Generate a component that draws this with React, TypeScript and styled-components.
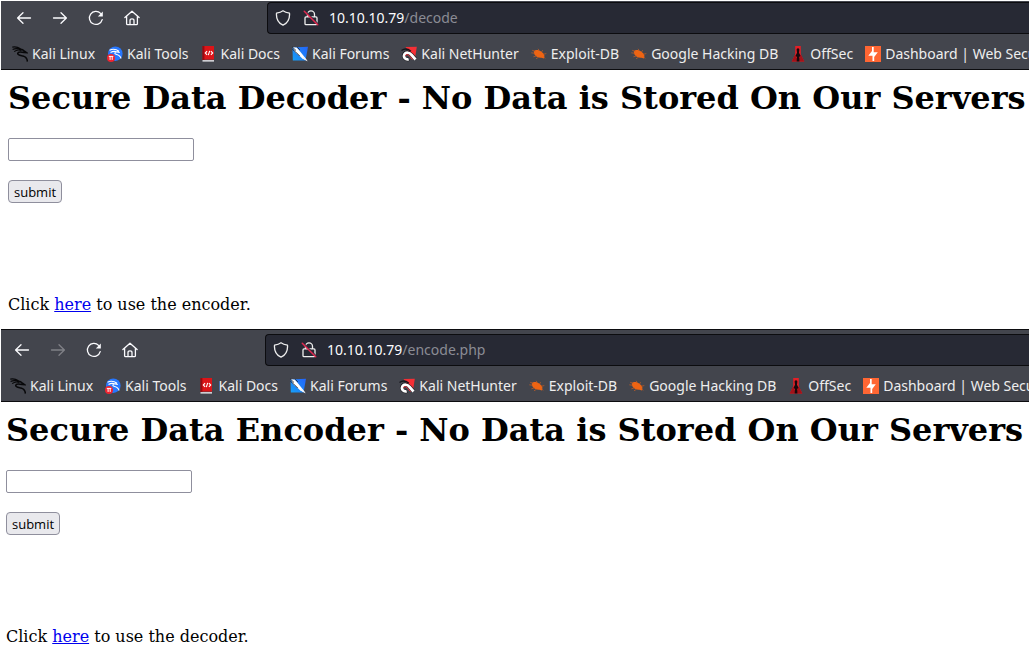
import React, { useId } from "react";
import styled, { createGlobalStyle } from "styled-components";

const GlobalStyle = createGlobalStyle`
  *, *::before, *::after { box-sizing: border-box; }
  html, body { margin: 0; background: #fff; }
  body { overflow-x: hidden; }
`;

const Stack = styled.main`
  display: flex;
  flex-direction: column;
  padding: 1px 0 0 1px;
`;

const Pane = styled.section`
  overflow: hidden;
`;

const Chrome = styled.header<{ $framed: boolean }>`
  background: #43454d;
  border-top: ${(p) => (p.$framed ? "1px solid #0c0c0f" : "0")};
  border-bottom: 1px solid #0c0c0f;
  padding-top: ${(p) => (p.$framed ? 4 : 1)}px;
  color: #eeeeee;
  font-family: "Noto Sans", sans-serif;
  font-size: 14px;
  line-height: 20px;
`;

const NavRow = styled.div<{ $inset: number }>`
  display: flex;
  align-items: center;
  padding-left: ${(p) => p.$inset}px;
`;

const NavButtons = styled.nav`
  display: flex;
  gap: 12px;
  padding: 0 123px 0 4px;
`;

const IconButton = styled.button`
  display: grid;
  place-items: center;
  width: 24px;
  height: 24px;
  padding: 0;
  border: 0;
  background: none;
  color: #fbfbfe;

  &:disabled {
    color: #808187;
  }
`;

const AddressBar = styled.div`
  display: flex;
  flex: 1;
  align-items: center;
  gap: 12px;
  height: 32px;
  padding-left: 7px;
  background: #272934;
  border: 1px solid #0c0c0f;
  border-right: 0;
  border-radius: 4px 0 0 4px;
`;

const Address = styled.span`
  margin-left: -2px;
  color: #8b8c94;
  white-space: nowrap;
`;

const Host = styled.span`
  color: #fbfbfe;
`;

const Bookmarks = styled.div<{ $inset: number }>`
  display: flex;
  gap: 12px;
  height: 35px;
  padding: 10px 0 5px ${(p) => p.$inset + 4}px;
  overflow: hidden;
`;

const Bookmark = styled.a`
  display: flex;
  flex: none;
  align-items: center;
  gap: 4px;
  color: inherit;
  text-decoration: none;
  white-space: nowrap;
`;

const Page = styled.div<{ $inset: number }>`
  display: flex;
  flex-direction: column;
  align-items: flex-start;
  padding: 9px 0 14px ${(p) => p.$inset}px;
  color: #000;
  font-family: "DejaVu Serif", serif;
  font-size: 16px;
  line-height: 20px;
`;

const Title = styled.h1`
  margin: 0 0 21px;
  font-size: 32px;
  font-weight: bold;
  line-height: 38px;
  white-space: nowrap;
`;

const CodeForm = styled.form`
  display: flex;
  flex-direction: column;
  align-items: flex-start;
  gap: 19px;
  margin-bottom: 92px;
`;

const TextField = styled.input`
  display: block;
  width: 186px;
  height: 23px;
  padding: 1px 2px;
  background: #fff;
  border: 1px solid #8f8f9d;
  border-radius: 2px;
  font: 13px "Noto Sans", sans-serif;
`;

const SubmitButton = styled.button`
  height: 23px;
  padding: 1px 5px 0;
  background: #e9e9ed;
  border: 1px solid #8f8f9d;
  border-radius: 4px;
  color: #000;
  font: 13px/20px "Open Sans", sans-serif;
`;

const Note = styled.p`
  margin: 0;
`;

const PageLink = styled.a`
  color: #0000ee;
  text-decoration: underline;
`;

const Glyph = ({ children }: { children: React.ReactNode }) => (
  <svg width="16" height="16" viewBox="0 0 16 16" fill="none" stroke="currentColor" strokeWidth="1.3" strokeLinecap="round" strokeLinejoin="round" aria-hidden="true">
    {children}
  </svg>
);

const BackIcon = () => (
  <Glyph><path d="M14.5 8H1.7M7 2.7 1.6 8 7 13.3" /></Glyph>
);
const ForwardIcon = () => (
  <Glyph><path d="M1.5 8h12.8M9 2.7 14.4 8 9 13.3" /></Glyph>
);
const ReloadIcon = () => (
  <Glyph>
    <path d="M14.2 9.6A6.5 6.5 0 1 1 12.6 3.4" />
    <path d="M14.8 1.4v5h-5z" fill="currentColor" stroke="none" />
  </Glyph>
);
const HomeIcon = () => (
  <Glyph>
    <path d="M.9 7.6 8 1.2l7.1 6.4M2.6 6.6v7.1c0 .6.4 1 1 1h8.8c.6 0 1-.4 1-1V6.6M6 14.5v-4c0-1 .7-1.7 2-1.7s2 .7 2 1.7v4" />
  </Glyph>
);
const ShieldIcon = () => (
  <Glyph>
    <path d="M8 .8c2 1.5 4 2 6.5 2.4.4 5.2-1.4 9.6-6.5 12C2.9 12.8 1.1 8.4 1.5 3.2 4 2.8 6 2.3 8 .8z" />
  </Glyph>
);
const LockIcon = () => (
  <Glyph>
    <path d="M4.5 6.8V4.400a3.500 3.500 0 0 1 7 0v2.400M3 6.900h10c.6 0 1 .4 1 1v5.800c0 .6-.4 1-1 1H3c-.6 0-1-.4-1-1V7.900c0-.6.4-1 1-1z" />
    <path d="M2.3 1.300 15 14" stroke="#272934" strokeWidth="1.5" />
    <path d="M1.3 1.300 14.700 14.700" stroke="#e22850" strokeWidth="1.5" />
  </Glyph>
);

const Favicon = ({ children }: { children: React.ReactNode }) => (
  <svg width="16" height="16" viewBox="0 0 16 16" fill="none" aria-hidden="true">{children}</svg>
);

const DragonIcon = () => (
  <Favicon>
    <path d="M.3 1.100C3 .6 6 1.100 8.500 2.700M.6 3.600C3 2.300 6 2.300 9 3.700M2.200 5.600C4 4 6.500 3.500 9.500 4.400" stroke="#08080a" strokeWidth="1.1" />
    <path d="M7.600 2.900c2 .2 4 1.100 5.200 2.500l1.800 1.300-2.400-.2C10 5.900 6 5.200 5.700 7.300c-.2 1.900 3 2.100 5.200 2.600 2.800.6 4.300 2.200 4.500 5.700" stroke="#08080a" strokeWidth="1.5" />
  </Favicon>
);

const ToolsIcon = () => (
  <Favicon>
    <circle cx="8.3" cy="7.7" r="7.3" fill="#2777ff" />
    <path d="M2.5 4.300C6 2.500 9.500 3.400 12 5.300M3.500 6.500c2-1.200 4-1.500 6-.8M12.800 6.400c-2.400-.8-5-.7-5 .8 0 1.800 5.500.6 6.200 5.300" stroke="#fff" strokeWidth="1.1" />
    <circle cx="4" cy="12" r="4" fill="#ee2430" />
    <path d="M1.800 10.400h4.500M3.100 10.400v3.500M5.200 10.400v3.500" stroke="#fff" strokeWidth="1" />
  </Favicon>
);

const DocsIcon = () => (
  <Favicon>
    <path d="M1.800 0H13v13.600H1.800z" fill="#dc1418" />
    <path d="M1.400 0h2v14h-2z" fill="#980a10" />
    <path d="M1.500 14.100H13v1.500H1.500z" fill="#dedee2" />
    <path d="M6.100 5.200 4.300 7l1.800 1.800M9.900 5.200 11.700 7 9.900 8.800M8.700 4.900 7.300 9.200" stroke="#fff" strokeWidth="1.1" />
  </Favicon>
);

const ForumsIcon = () => {
  const id = useId();
  return (
    <Favicon>
      <defs>
        <linearGradient id={id} x1="0" y1="16" x2="16" y2="0" gradientUnits="userSpaceOnUse">
          <stop stopColor="#16a4f5" />
          <stop offset="1" stopColor="#2462fb" />
        </linearGradient>
      </defs>
      <path d="M.5 1.500 16 .8 13.500 14.500H.8z" fill={`url(#${id})`} />
      <path d="m1 1.200 4 .5 2.700 3.200 4 5 3.900 5-5.200-2.500-4.800-4.100L3 6z" fill="#fff" />
      <path d="m.3 1 3.700 3.500M.3 3.100l3.500 3 4 4M5.300 1.500l2.500 2.300" stroke="#16171c" strokeWidth=".8" />
      <path d="m11 9.800 4.700 5.600-5.100-2.900z" fill="#f2f5fa" />
    </Favicon>
  );
};

const NetHunterIcon = () => (
  <Favicon>
    <path d="M4.500 1 15.800.8l-2 12.700z" fill="#f52f35" />
    <path d="M.5 4.500c3-2 6.500-1.700 9.300.8" stroke="#15151a" strokeWidth="1.5" />
    <path d="M14.300 13 10.600 8.800C8.500 6.300 5 5.400 3.300 7.900 1.500 10.900 4.500 14.400 8 13" stroke="#15151a" strokeWidth="3.6" />
    <path d="M14.500 13.500 10.600 9C8.500 6.500 5 5.800 3.500 8.200c-1.700 3 1 6 4.200 5" stroke="#fff" strokeWidth="2.7" />
    <path d="M4.500 10c0-2 2.500-2 4.300.3l2.700 3.200" stroke="#f52f35" strokeWidth="1" />
  </Favicon>
);

const BugIcon = () => (
  <Favicon>
    <path d="M2.800 5.200C4.600 3.300 8 3.700 10.200 5.600l2.300 1.900 1 2.300-.6 2.600-2.400-.7C7.800 12 4.200 10.600 3.200 8z" fill="#ee6413" />
    <path d="M4.200 5.300 1.200 4.300M3.600 7.300.3 6.800M5.400 9.900l-3 .9M7.300 11.400 5 12.800M8.300 4.500l-1.300-1.700M10.500 6l1.200-1.800M12.500 8.300l2.800-.8M12.700 11l1.600 1.400" stroke="#b85c28" strokeWidth=".8" />
  </Favicon>
);

const OffSecIcon = () => (
  <Favicon>
    <path d="M5.200 0h5.600v8.200l3.500 7.300H1.700l3.500-7.300z" fill="#e31f26" />
    <path d="M5.200 8.200 1.700 15.500h5.100l1.300-5.700 1.200 5.700h5l-3.500-7.300-1.500 4H6.500z" fill="#a31219" />
    <path d="M8 2.200c1 0 1.600.8 1.300 2L9 6.700l1.500 3-1.300 1.200.2 4.600H6.700l.2-4.600-1.300-1.200L7 6.700l-.3-2.500c-.3-1.200.3-2 1.300-2z" fill="#16090d" />
  </Favicon>
);

const BurpIcon = () => (
  <Favicon>
    <path d="M0 0h16v16H0z" fill="#ff6633" />
    <path d="M8.700 1v5.300h4.100L9.200 11v4H7.500V9.700H3.300L7 5.100V1z" fill="#fff" />
  </Favicon>
);

const bookmarks = [
  { label: "Kali Linux", Icon: DragonIcon },
  { label: "Kali Tools", Icon: ToolsIcon },
  { label: "Kali Docs", Icon: DocsIcon },
  { label: "Kali Forums", Icon: ForumsIcon },
  { label: "Kali NetHunter", Icon: NetHunterIcon },
  { label: "Exploit-DB", Icon: BugIcon },
  { label: "Google Hacking DB", Icon: BugIcon },
  { label: "OffSec", Icon: OffSecIcon },
  { label: "Dashboard | Web Security Academy", Icon: BurpIcon },
];

interface BrowserProps {
  path: string;
  title: string;
  other: string;
  inset: number;
  framed?: boolean;
  canGoForward?: boolean;
}

function Browser({ path, title, other, inset, framed = false, canGoForward = false }: BrowserProps) {
  return (
    <Pane>
      <Chrome $framed={framed}>
        <NavRow $inset={inset}>
          <NavButtons aria-label="Browser navigation">
            <IconButton type="button" aria-label="Back"><BackIcon /></IconButton>
            <IconButton type="button" aria-label="Forward" disabled={!canGoForward}><ForwardIcon /></IconButton>
            <IconButton type="button" aria-label="Reload"><ReloadIcon /></IconButton>
            <IconButton type="button" aria-label="Home"><HomeIcon /></IconButton>
          </NavButtons>
          <AddressBar>
            <ShieldIcon />
            <LockIcon />
            <Address><Host>10.10.10.79</Host>{path}</Address>
          </AddressBar>
        </NavRow>
        <Bookmarks $inset={inset}>
          {bookmarks.map(({ label, Icon }) => (
            <Bookmark href="#" key={label}><Icon />{label}</Bookmark>
          ))}
        </Bookmarks>
      </Chrome>
      <Page $inset={inset}>
        <Title>{title}</Title>
        <CodeForm onSubmit={(e) => e.preventDefault()}>
          <TextField type="text" aria-label={title} />
          <SubmitButton type="submit">submit</SubmitButton>
        </CodeForm>
        <Note>Click <PageLink href="#">here</PageLink> to use the {other}.</Note>
      </Page>
    </Pane>
  );
}

export default function App() {
  return (
    <>
      <GlobalStyle />
      <Stack>
        <Browser path="/decode" title="Secure Data Decoder - No Data is Stored On Our Servers" other="encoder" inset={7} canGoForward />
        <Browser path="/encode.php" title="Secure Data Encoder - No Data is Stored On Our Servers" other="decoder" inset={5} framed />
      </Stack>
    </>
  );
}
